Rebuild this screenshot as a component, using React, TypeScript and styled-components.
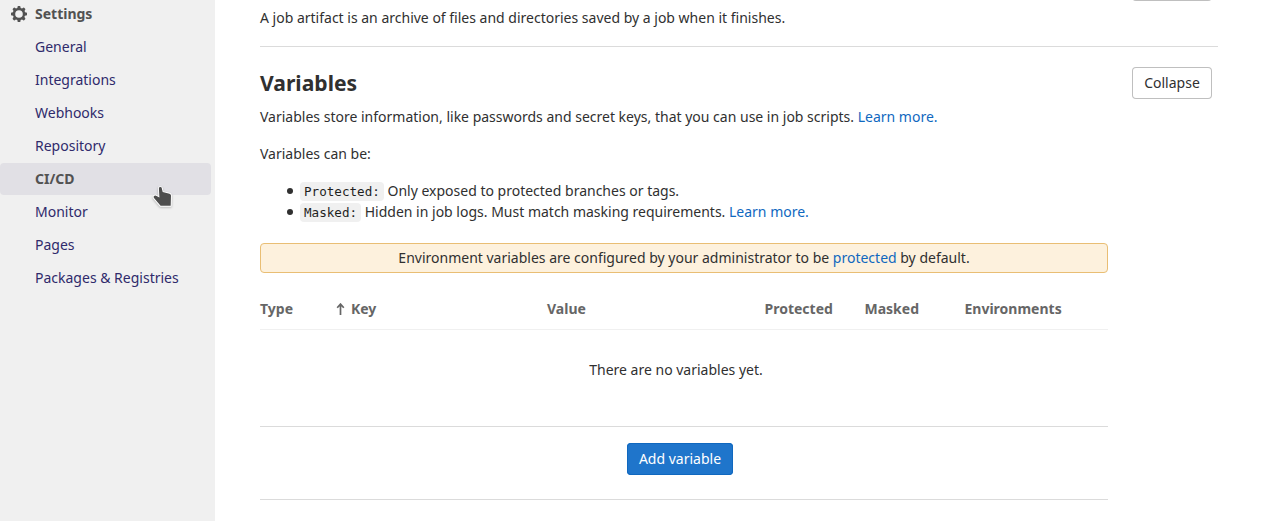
import React from "react";
import styled, { createGlobalStyle } from "styled-components";

const Global = createGlobalStyle`
  *, *::before, *::after { box-sizing: border-box; }
  html, body { margin: 0; background: #fff; overflow: hidden; }
  body {
    font: 14px/20px "Noto Sans", sans-serif;
    color: #303030;
  }
`;

const Page = styled.div`
  display: flex;
  height: 521px;
  overflow: hidden;
`;

const Sidebar = styled.nav`
  flex: 0 0 215px;
  background: #f0f0f0;
  position: relative;
`;

const NavList = styled.ul`
  list-style: none;
  margin: -2px 4px 0 0;
  padding: 0;
  display: flex;
  flex-direction: column;
  gap: 1px;
`;

const NavItem = styled.li<{ $active?: boolean; $heading?: boolean }>`
  display: flex;
  align-items: center;
  gap: 8px;
  height: 32px;
  padding-left: ${(p) => (p.$heading ? 11 : 35)}px;
  border-radius: 4px;
  font-weight: ${(p) => (p.$active || p.$heading ? 700 : 400)};
  color: ${(p) => (p.$active || p.$heading ? "#525252" : "#2f2a6b")};
  background: ${(p) => (p.$active ? "#e1e0e5" : "transparent")};
`;

const Pointer = styled.svg`
  position: absolute;
  left: 150px;
  top: 183px;
  filter: drop-shadow(0 1px 1px rgba(0, 0, 0, 0.25));
`;

const Main = styled.main`
  flex: 1;
  padding-left: 45px;
`;

const Panel = styled.section<{ $first?: boolean }>`
  width: 958px;
  display: flex;
  justify-content: space-between;
  align-items: flex-start;
  padding: ${(p) => (p.$first ? "0 6px 0 0" : "20px 6px 0 0")};
  height: ${(p) => (p.$first ? "47px" : "auto")};
  border-bottom: ${(p) => (p.$first ? "1px solid #dbdbdb" : "0")};
`;

const Body = styled.div`
  width: 848px;
`;

const Text = styled.p<{ $top?: number }>`
  margin: ${(p) => p.$top ?? 0}px 0 0;
`;

const Title = styled.h4`
  margin: 0;
  font-size: 21.1px;
  line-height: 32px;
  font-weight: 700;
`;

const Link = styled.a`
  color: #1068bf;
`;

const Button = styled.button<{ $primary?: boolean; $top?: number }>`
  width: ${(p) => (p.$primary ? 106 : 80)}px;
  height: 32px;
  margin: ${(p) => p.$top ?? 0}px 0 0;
  padding: 0;
  flex: none;
  font: inherit;
  line-height: 16px;
  border: 0;
  border-radius: 4px;
  color: ${(p) => (p.$primary ? "#fff" : "#303030")};
  background: ${(p) => (p.$primary ? "#1f75cb" : "#fff")};
  box-shadow: inset 0 0 0 1px ${(p) => (p.$primary ? "#1068bf" : "#bfbfbf")};
`;

const Bullets = styled.ul`
  list-style: none;
  margin: 16px 0 0;
  padding: 0 0 0 27px;
`;

const Bullet = styled.li`
  height: 21px;
  line-height: 21px;

  &::before {
    content: "";
    display: inline-block;
    width: 6px;
    height: 6px;
    margin-right: 7px;
    border-radius: 50%;
    background: #303030;
    vertical-align: 2px;
  }
`;

const Code = styled.code`
  font: 12.6px "DejaVu Sans Mono", monospace;
  padding: 2px 4px;
  background: #f0f0f0;
  border-radius: 4px;
  color: #1f1f1f;
`;

const Notice = styled.div`
  height: 30px;
  margin-top: 21px;
  line-height: 28px;
  text-align: center;
  background: #fdf1dd;
  border: 1px solid #e9be74;
  border-radius: 4px;
`;

const TableHead = styled.div`
  display: grid;
  grid-template-columns: 75px 212px 217.5px 100px 100px 1fr;
  align-items: center;
  height: 57px;
  padding-top: 16px;
  padding-bottom: 1px;
  border-bottom: 1px solid #f0f0f0;
  font-weight: 700;
  color: #666;
`;

const Sorted = styled.span`
  display: flex;
  align-items: center;
  gap: 6px;
  padding-left: 1px;
`;

const Empty = styled.div`
  height: 97px;
  padding: 30px 16px 0 0;
  text-align: center;
  border-bottom: 1px solid #dbdbdb;
`;

const Footer = styled.div`
  height: 73px;
  display: flex;
  justify-content: center;
  padding: 16px 8px 0 0;
  border-bottom: 1px solid #dbdbdb;
`;

const GearIcon = () => (
  <svg width="16" height="16" viewBox="0 0 16 16" fill="none" stroke="#525252">
    <circle cx="8" cy="8" r="5" strokeWidth="2.4" />
    {[0, 45, 90, 135, 180, 225, 270, 315].map((a) => (
      <path key={a} d="M6.2 2.9 6.6.6Q6.7 0 7.3 0h1.4q.6 0 .7.6l.4 2.3z" fill="#525252" stroke="none" transform={`rotate(${a} 8 8)`} />
    ))}
  </svg>
);

const ArrowUp = () => (
  <svg width="9" height="12" viewBox="0 0 9 12" fill="none" stroke="#666" strokeWidth="1.7">
    <path d="M4.5 12V1M1.2 4.7l3.3-3.6 3.3 3.6" />
  </svg>
);

const pages = ["General", "Integrations", "Webhooks", "Repository", "CI/CD", "Monitor", "Pages", "Packages & Registries"];

export default function App() {
  return (
    <Page>
      <Global />
      <Sidebar>
        <NavList>
          <NavItem $heading>
            <GearIcon />
            Settings
          </NavItem>
          {pages.map((name) => (
            <NavItem key={name} $active={name === "CI/CD"}>
              {name}
            </NavItem>
          ))}
        </NavList>
        <Pointer width="24" height="26" viewBox="0 0 24 26">
          <path
            d="M8.9 5.4Q8.9 4.1 10.3 4.1T11.8 5.3L12.7 9l6.8 1.7q1.5.4 1.5 1.8L20.7 22.8H10.6L4 15.1q-.9-1.3 0-2.2 1.3-.9 2.6 0l2.8 1.7z"
            fill="#4d4d4d"
            stroke="#fff"
            strokeWidth="1.8"
            strokeLinejoin="round"
            paintOrder="stroke"
          />
        </Pointer>
      </Sidebar>
      <Main>
        <Panel $first>
          <Text $top={8}>A job artifact is an archive of files and directories saved by a job when it finishes.</Text>
          <Button $top={-31} aria-label="Expand artifacts" />
        </Panel>
        <Panel>
          <Body>
            <Title>Variables</Title>
            <Text $top={8}>
              Variables store information, like passwords and secret keys, that you can use in job scripts. <Link>Learn more.</Link>
            </Text>
            <Text $top={17}>Variables can be:</Text>
            <Bullets>
              <Bullet>
                <Code>Protected:</Code> Only exposed to protected branches or tags.
              </Bullet>
              <Bullet>
                <Code>Masked:</Code> Hidden in job logs. Must match masking requirements. <Link>Learn more.</Link>
              </Bullet>
            </Bullets>
            <Notice>
              Environment variables are configured by your administrator to be <Link>protected</Link> by default.
            </Notice>
            <TableHead>
              <span>Type</span>
              <Sorted>
                <ArrowUp />
                Key
              </Sorted>
              <span>Value</span>
              <span>Protected</span>
              <span>Masked</span>
              <span>Environments</span>
            </TableHead>
            <Empty>There are no variables yet.</Empty>
            <Footer>
              <Button $primary>Add variable</Button>
            </Footer>
          </Body>
          <Button>Collapse</Button>
        </Panel>
      </Main>
    </Page>
  );
}
